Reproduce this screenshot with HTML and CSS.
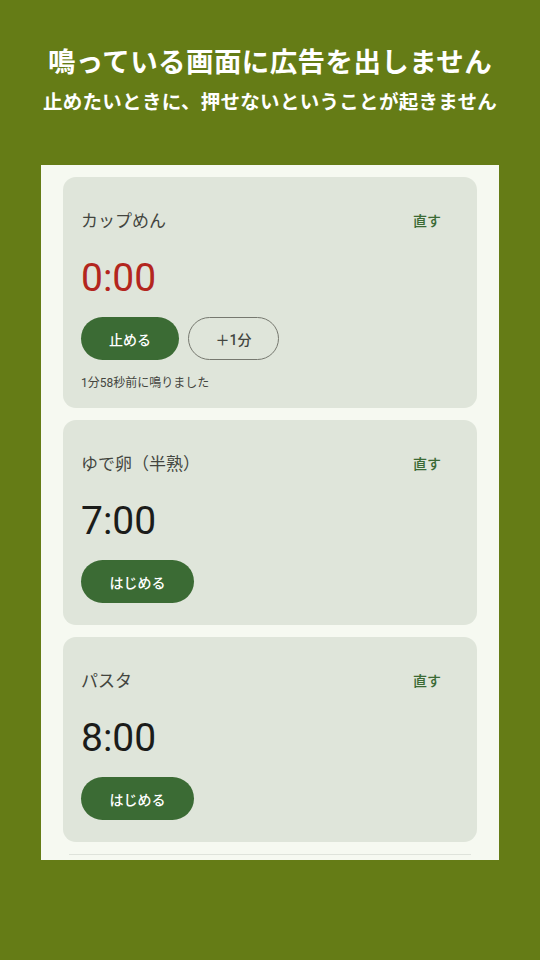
FILE: index.html
```html
<!DOCTYPE html>
<html lang="ja">
<head>
<meta charset="utf-8">
<link rel="stylesheet" href="styles.css">
</head>
<body>
<header class="promo">
  <h1 class="promo-title">鳴っている画面に広告を出しません</h1>
  <p class="promo-sub">止めたいときに、押せないということが起きません</p>
</header>
<main class="screen">
  <section class="card">
    <div class="card-head">
      <span class="card-name">カップめん</span>
      <span class="edit">直す</span>
    </div>
    <div class="time time-done">0:00</div>
    <div class="actions">
      <button class="btn btn-fill btn-stop">止める</button>
      <button class="btn btn-outline">＋1分</button>
    </div>
    <p class="hint">1分58秒前に鳴りました</p>
  </section>
  <section class="card">
    <div class="card-head">
      <span class="card-name">ゆで卵（半熟）</span>
      <span class="edit">直す</span>
    </div>
    <div class="time">7:00</div>
    <div class="actions">
      <button class="btn btn-fill btn-start">はじめる</button>
    </div>
  </section>
  <section class="card">
    <div class="card-head">
      <span class="card-name">パスタ</span>
      <span class="edit">直す</span>
    </div>
    <div class="time">8:00</div>
    <div class="actions">
      <button class="btn btn-fill btn-start">はじめる</button>
    </div>
  </section>
  <div class="peek-line"></div>
</main>
</body>
</html>
```
FILE: styles.css
```css
html, body {
  margin: 0;
  padding: 0;
}
body {
  width: 540px;
  height: 960px;
  background: #657c16;
  font-family: "Roboto", "Noto Sans CJK JP", sans-serif;
  overflow: hidden;
}
.promo {
  padding-top: 42px;
  text-align: center;
  color: #ffffff;
}
.promo-title {
  margin: 0;
  font-family: "Noto Sans CJK JP", sans-serif;
  font-size: 27.5px;
  line-height: 36px;
  font-weight: 700;
  letter-spacing: 0.4px;
}
.promo-sub {
  margin: 9px 0 0;
  font-family: "Noto Sans CJK JP", sans-serif;
  font-size: 19.5px;
  line-height: 28px;
  font-weight: 700;
  letter-spacing: 0.3px;
}
.screen {
  margin: 50px 0 0 41px;
  width: 458px;
  height: 695px;
  box-sizing: border-box;
  padding: 12px 22px 0;
  background: #f6f9f1;
  overflow: hidden;
  display: flex;
  flex-direction: column;
  gap: 12px;
}
.card {
  flex: none;
  background: #dfe5da;
  border-radius: 13px;
  padding: 32px 18px 22px;
}
.peek-line {
  flex: none;
  height: 1px;
  margin: 0 6px;
  background: #dfe3db;
}
.card-head {
  display: flex;
  justify-content: space-between;
  align-items: center;
  height: 24px;
}
.card-name {
  font-size: 17px;
  line-height: 24px;
  color: #43453f;
}
.edit {
  font-size: 14px;
  line-height: 24px;
  font-weight: 500;
  color: #3b6a34;
  padding: 0 12px;
  margin-right: 6px;
}
.time {
  margin-top: 21px;
  font-size: 39px;
  line-height: 48px;
  color: #1b1c1a;
}
.time-done {
  color: #b3261e;
}
.actions {
  margin-top: 15px;
  display: flex;
  gap: 9px;
}
.btn {
  height: 43px;
  border-radius: 22px;
  font-family: "Roboto", "Noto Sans CJK JP", sans-serif;
  font-size: 14px;
  font-weight: 500;
  padding: 0;
  box-sizing: border-box;
}
.btn-fill {
  background: #3b6b34;
  color: #ffffff;
  border: none;
}
.btn-stop {
  width: 98px;
}
.btn-start {
  width: 113px;
}
.btn-outline {
  width: 91px;
  background: transparent;
  border: 1px solid #76786f;
  color: #43453f;
}
.hint {
  margin: 15px 0 -5px;
  font-size: 12px;
  line-height: 16px;
  color: #44463f;
}
```
